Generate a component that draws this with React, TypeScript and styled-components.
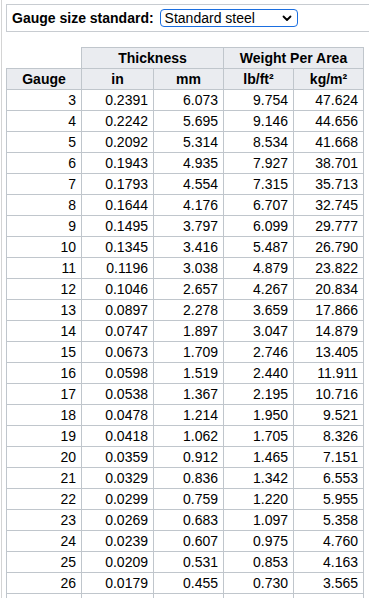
import React from 'react';
import styled, { createGlobalStyle } from 'styled-components';

const GlobalStyle = createGlobalStyle`
  html, body {
    margin: 0;
    padding: 0;
    background: #fff;
    overflow: hidden;
  }
  body {
    font-family: 'Liberation Sans', Arial, sans-serif;
    color: #000;
  }
`;

const Page = styled.div`
  margin-left: 1px;
  border-left: 1px solid #d4d4d4;
  padding: 4px 0 0 4px;
  height: 100vh;
  box-sizing: border-box;
  overflow: hidden;
`;

const Panel = styled.div`
  display: flex;
  align-items: center;
  gap: 6px;
  height: 26px;
  padding-left: 5px;
  border: 1px solid #c8ccd1;
  border-right: none;
`;

const Label = styled.label`
  font-size: 14px;
  font-weight: bold;
`;

const Select = styled.div`
  display: flex;
  align-items: center;
  justify-content: space-between;
  box-sizing: border-box;
  width: 138px;
  height: 18px;
  padding: 0 5px 0 4px;
  border: 1.5px solid #1a6ee0;
  border-radius: 4px;
  font-size: 14px;
  background: #fff;
`;

const Table = styled.table`
  margin-top: 15px;
  border-collapse: collapse;
  table-layout: fixed;
  width: 358px;
  font-size: 14px;
`;

const Head = styled.th<{ $blank?: boolean }>`
  height: 20px;
  padding: 0 4px;
  font-weight: bold;
  text-align: center;
  background: ${(p) => (p.$blank ? '#fff' : '#eaecf0')};
  border: ${(p) => (p.$blank ? 'none' : '1px solid #c0c6cc')};
`;

const Cell = styled.td`
  height: 20px;
  padding: 0 5px;
  text-align: right;
  border: 1px solid #c0c6cc;
  white-space: nowrap;
`;

const rows: [number, string, string, string, string][] = [
  [3, '0.2391', '6.073', '9.754', '47.624'],
  [4, '0.2242', '5.695', '9.146', '44.656'],
  [5, '0.2092', '5.314', '8.534', '41.668'],
  [6, '0.1943', '4.935', '7.927', '38.701'],
  [7, '0.1793', '4.554', '7.315', '35.713'],
  [8, '0.1644', '4.176', '6.707', '32.745'],
  [9, '0.1495', '3.797', '6.099', '29.777'],
  [10, '0.1345', '3.416', '5.487', '26.790'],
  [11, '0.1196', '3.038', '4.879', '23.822'],
  [12, '0.1046', '2.657', '4.267', '20.834'],
  [13, '0.0897', '2.278', '3.659', '17.866'],
  [14, '0.0747', '1.897', '3.047', '14.879'],
  [15, '0.0673', '1.709', '2.746', '13.405'],
  [16, '0.0598', '1.519', '2.440', '11.911'],
  [17, '0.0538', '1.367', '2.195', '10.716'],
  [18, '0.0478', '1.214', '1.950', '9.521'],
  [19, '0.0418', '1.062', '1.705', '8.326'],
  [20, '0.0359', '0.912', '1.465', '7.151'],
  [21, '0.0329', '0.836', '1.342', '6.553'],
  [22, '0.0299', '0.759', '1.220', '5.955'],
  [23, '0.0269', '0.683', '1.097', '5.358'],
  [24, '0.0239', '0.607', '0.975', '4.760'],
  [25, '0.0209', '0.531', '0.853', '4.163'],
  [26, '0.0179', '0.455', '0.730', '3.565'],
];

const Chevron = () => (
  <svg width="10" height="7" viewBox="0 0 10 7">
    <path d="M1.5 1.5 L5 5 L8.5 1.5" fill="none" stroke="#000" strokeWidth="1.8" strokeLinecap="round" strokeLinejoin="round" />
  </svg>
);

export default function App() {
  return (
    <Page>
      <GlobalStyle />
      <Panel>
        <Label>Gauge size standard:</Label>
        <Select>
          <span>Standard steel</span>
          <Chevron />
        </Select>
      </Panel>
      <Table>
        <colgroup>
          <col style={{ width: 75 }} />
          <col style={{ width: 72 }} />
          <col style={{ width: 70 }} />
          <col style={{ width: 70 }} />
          <col style={{ width: 70 }} />
        </colgroup>
        <thead>
          <tr>
            <Head $blank />
            <Head colSpan={2}>Thickness</Head>
            <Head colSpan={2}>Weight Per Area</Head>
          </tr>
          <tr>
            <Head>Gauge</Head>
            <Head>in</Head>
            <Head>mm</Head>
            <Head>lb/ft²</Head>
            <Head>kg/m²</Head>
          </tr>
        </thead>
        <tbody>
          {rows.map((r) => (
            <tr key={r[0]}>
              {r.map((v, i) => (
                <Cell key={i}>{v}</Cell>
              ))}
            </tr>
          ))}
          <tr>
            {r5.map((k) => (
              <Cell key={k} />
            ))}
          </tr>
        </tbody>
      </Table>
    </Page>
  );
}

const r5 = [0, 1, 2, 3, 4];
